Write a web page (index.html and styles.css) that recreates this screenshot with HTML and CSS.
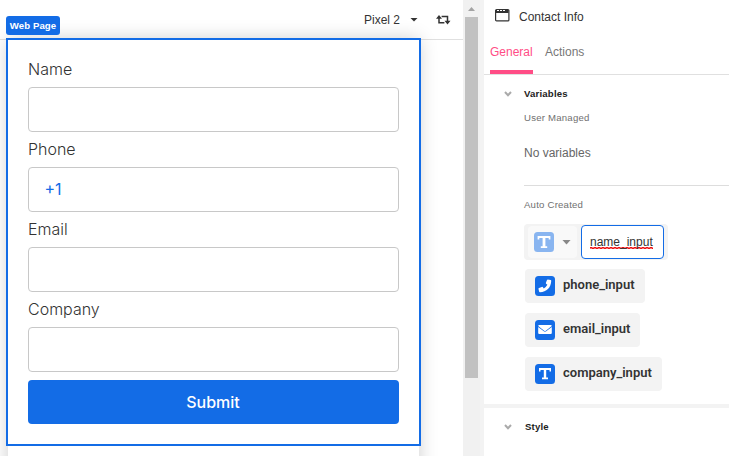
FILE: index.html
```
<!DOCTYPE html>
<html lang="en">
<head>
<meta charset="utf-8">
<title>Contact Info</title>
<link rel="stylesheet" href="styles.css">
</head>
<body>
<div class="app">
  <main class="canvas">
    <header class="toolbar">
      <span class="device">Pixel 2</span>
      <span class="caret"></span>
      <svg class="rotate" width="15" height="10" viewBox="0 0 15 10"><path d="M3 2.2V7.7H8.4M5.6 1.5H11.5V7" fill="none" stroke="#333" stroke-width="1.5"/><path d="M0 3.8L3 0L6 3.8ZM8.5 5.8L11.5 9.6L14.5 5.8Z" fill="#333"/></svg>
    </header>
    <div class="workspace">
      <div class="device-page">
        <form class="form">
          <span class="badge">Web Page</span>
          <label>Name</label><div class="field"></div>
          <label>Phone</label><div class="field">+1</div>
          <label>Email</label><div class="field"></div>
          <label>Company</label><div class="field"></div>
          <button type="button" class="submit">Submit</button>
        </form>
      </div>
    </div>
  </main>
  <div class="scrollbar"><span class="up"></span><span class="thumb"></span></div>
  <aside class="panel">
    <div class="title">
      <svg width="15" height="13" viewBox="0 0 15 13"><rect x=".6" y=".6" width="13.3" height="11.3" rx="1" fill="#fff" stroke="#333" stroke-width="1.2"/><path d="M1 1H13.5V4H1Z" fill="#333"/><path d="M2 1.5H4M5 1.5H7M8 1.5H10" stroke="#fff" stroke-width="1"/></svg>
      <span>Contact Info</span>
    </div>
    <nav class="tabs"><span class="tab active">General</span><span class="tab">Actions</span></nav>
    <section class="variables">
      <h2><svg class="chevron" width="8" height="6" viewBox="0 0 8 6"><path d="M1 1L4 4.2L7 1" /></svg><span>Variables</span></h2>
      <p class="sub">User Managed</p>
      <p class="none">No variables</p>
      <p class="sub auto">Auto Created</p>
      <div class="edit">
        <div class="type">
          <svg class="icon faded" width="20" height="20" viewBox="0 0 20 20"><rect width="20" height="20" rx="3.5"/><path d="M3.6 4H16.4V7.6H14.7V6H11.4V14.2H13.2V16H6.8V14.2H8.6V6H5.3V7.6H3.6Z"/></svg>
          <span class="caret grey"></span>
        </div>
        <div class="entry"><span class="misspelt">name_input</span></div>
      </div>
      <div class="chip phone"><svg class="icon" width="20" height="20" viewBox="0 0 20 20"><rect width="20" height="20" rx="3.5"/><path d="M12.8 3.4L15.6 4.1Q16.3 4.3 16.2 5C16 11.5 11.5 16.2 5 16.2Q4.3 16.2 4.1 15.6L3.5 12.9Q3.4 12.3 4 12L6.8 10.9Q7.3 10.7 7.7 11.1L8.8 12.4Q11.1 11.2 12.4 8.8L11.1 7.7Q10.7 7.3 10.9 6.8L12 4Q12.2 3.4 12.8 3.4Z"/></svg><span>phone_input</span></div>
      <div class="chip email"><svg class="icon" width="20" height="20" viewBox="0 0 20 20"><rect width="20" height="20" rx="3.5"/><path d="M4.3 5H15.7Q16.8 5 16.8 6.1L10.8 10.7Q10 11.3 9.2 10.7L3.2 6.1Q3.2 5 4.3 5ZM3.2 6.9L8.8 11.2Q10 12.1 11.2 11.2L16.8 6.9V12.9Q16.8 14 15.7 14H4.3Q3.2 14 3.2 12.9Z"/></svg><span>email_input</span></div>
      <div class="chip company"><svg class="icon" width="20" height="20" viewBox="0 0 20 20"><rect width="20" height="20" rx="3.5"/><path d="M4 4H16V7.6H14.5V6H11.2V13.5H13V15.2H7V13.5H8.8V6H5.5V7.6H4Z"/></svg><span>company_input</span></div>
    </section>
    <section class="style"><h2><svg class="chevron" width="8" height="6" viewBox="0 0 8 6"><path d="M1 1L4 4.2L7 1" /></svg><span>Style</span></h2></section>
  </aside>
</div>
</body>
</html>
```

FILE: styles.css
```
* { box-sizing: border-box; }
body { margin: 0; background: #fff; color: #333; font-family: "Liberation Sans", Arial, sans-serif; font-size: 12px; }
.app { display: flex; width: 729px; height: 456px; overflow: hidden; }
.canvas { width: 463px; height: 456px; overflow: hidden; }
.toolbar { height: 40px; border-bottom: 1px solid #e0e0e0; display: flex; align-items: center; padding-left: 364px; }
.device { width: 36px; white-space: nowrap; }
.caret { width: 8px; height: 4px; margin-left: 10px; background: #333; clip-path: polygon(0 0, 100% 0, 50% 100%); }
.caret.grey { width: 9px; height: 5px; background: #888; margin-left: 8px; }
.rotate { margin-left: 18px; }
.workspace { padding-left: 8px; margin-top: -1px; }
.device-page { width: 411px; height: 440px; background: #fff; box-shadow: 0 0 18px rgba(0, 0, 0, .2); }
.form { position: relative; margin: 0 -2px; top: -1px; width: 415px; height: 408px; border: 2px solid #136ce6; background: #fff; padding: 19px 20px 20px; display: flex; flex-direction: column; font-family: Inter, sans-serif; font-size: 16px; }
.badge { position: absolute; left: -2px; top: -24px; width: 54px; height: 19px; border-radius: 3px; background: #136ce6; color: #fff; font: bold 9.6px/19px "Liberation Sans", sans-serif; letter-spacing: .1px; text-align: center; white-space: nowrap; }
.form label { height: 28px; line-height: 20px; font-weight: 300; color: #333; }
.field { height: 45px; margin-bottom: 7px; border: 1px solid #c8c8c8; border-radius: 4px; padding-left: 16px; line-height: 43px; color: #136ce6; text-indent: -.5px; }
.submit { height: 44px; margin-top: 1px; border: 0; border-radius: 4px; padding: 0 1px 0 0; background: #136ce6; color: #fff; font: 500 16px/44px Inter, sans-serif; }
.scrollbar { width: 21px; background: #f1f1f1; border-right: 4px solid #f3f3f3; padding: 7px 2px 0; }
.up { display: block; width: 7px; height: 4px; margin: 0 0 6px 3px; background: #a3a3a3; clip-path: polygon(50% 0, 100% 100%, 0 100%); }
.thumb { display: block; width: 13px; height: 361px; background: #c1c1c1; }
.panel { width: 245px; display: flex; flex-direction: column; }
.title { height: 33px; display: flex; align-items: center; gap: 9px; padding-left: 11px; }
.title svg { position: relative; top: -1px; }
.tabs { height: 42px; border-bottom: 1px solid #e0e0e0; display: flex; gap: 12px; padding-left: 6px; color: #777; }
.tab { height: 41px; line-height: 38px; }
.tab.active { width: 43px; color: #ff4d86; border-bottom: 4px solid #ff4d86; }
h2 { margin: 0; height: 14px; line-height: 14px; font-size: 9.6px; letter-spacing: .18px; color: #222; display: flex; align-items: center; }
.chevron { margin: 0 12px 0 20px; fill: none; stroke: #aaa; stroke-width: 2; position: relative; top: -.5px; }
.variables { height: 329px; padding-top: 12px; }
.sub { font-size: 9.6px; letter-spacing: .22px; line-height: 14px; color: #707070; margin: 10px 0 0 40px; }
.none { margin: 20px 0 0 40px; height: 41px; line-height: 16px; padding-bottom: 16px; color: #666; border-bottom: 1px solid #ddd; }
.sub.auto { margin-top: 12px; }
.edit { margin: 12px 0 9px 40px; width: 144px; height: 36px; background: #f3f3f3; border-radius: 4px; padding: 1px 4px; display: flex; align-items: center; }
.type { width: 49px; height: 32px; margin-right: 4px; padding-left: 6px; border-radius: 4px; background: #f9f9f9; display: flex; align-items: center; }
.entry { width: 83px; height: 34px; border: 1px solid #136ce6; border-radius: 4px; background: #fff; padding-left: 8px; line-height: 32px; }
.misspelt { display: inline-block; height: 16px; line-height: 16px; background: repeating-linear-gradient(90deg, #e11 0 2px, transparent 2px 4px) 0 13px / 100% 1px no-repeat, repeating-linear-gradient(90deg, transparent 0 2px, #e11 2px 4px) 0 14px / 100% 1px no-repeat, repeating-linear-gradient(90deg, #e119 0 4px) 0 13px / 100% 2px no-repeat; }
.icon { flex: none; fill: #fff; }
.icon rect { fill: #136ce6; }
.icon.faded rect { fill: #89b5f0; }
.chip { height: 34px; margin: 0 0 10px 41px; padding: 0 10px; background: #f3f3f3; border-radius: 4px; display: flex; align-items: center; gap: 8px; font: 600 13px/34px Roboto, sans-serif; color: #333; }
.chip span { position: relative; top: -1px; }
.phone { width: 120px; }
.email { width: 115px; }
.company { width: 137px; }
.style { border-top: 4px solid #f3f3f3; padding-top: 12px; }
.style h2 span { margin-left: 1px; }
```
